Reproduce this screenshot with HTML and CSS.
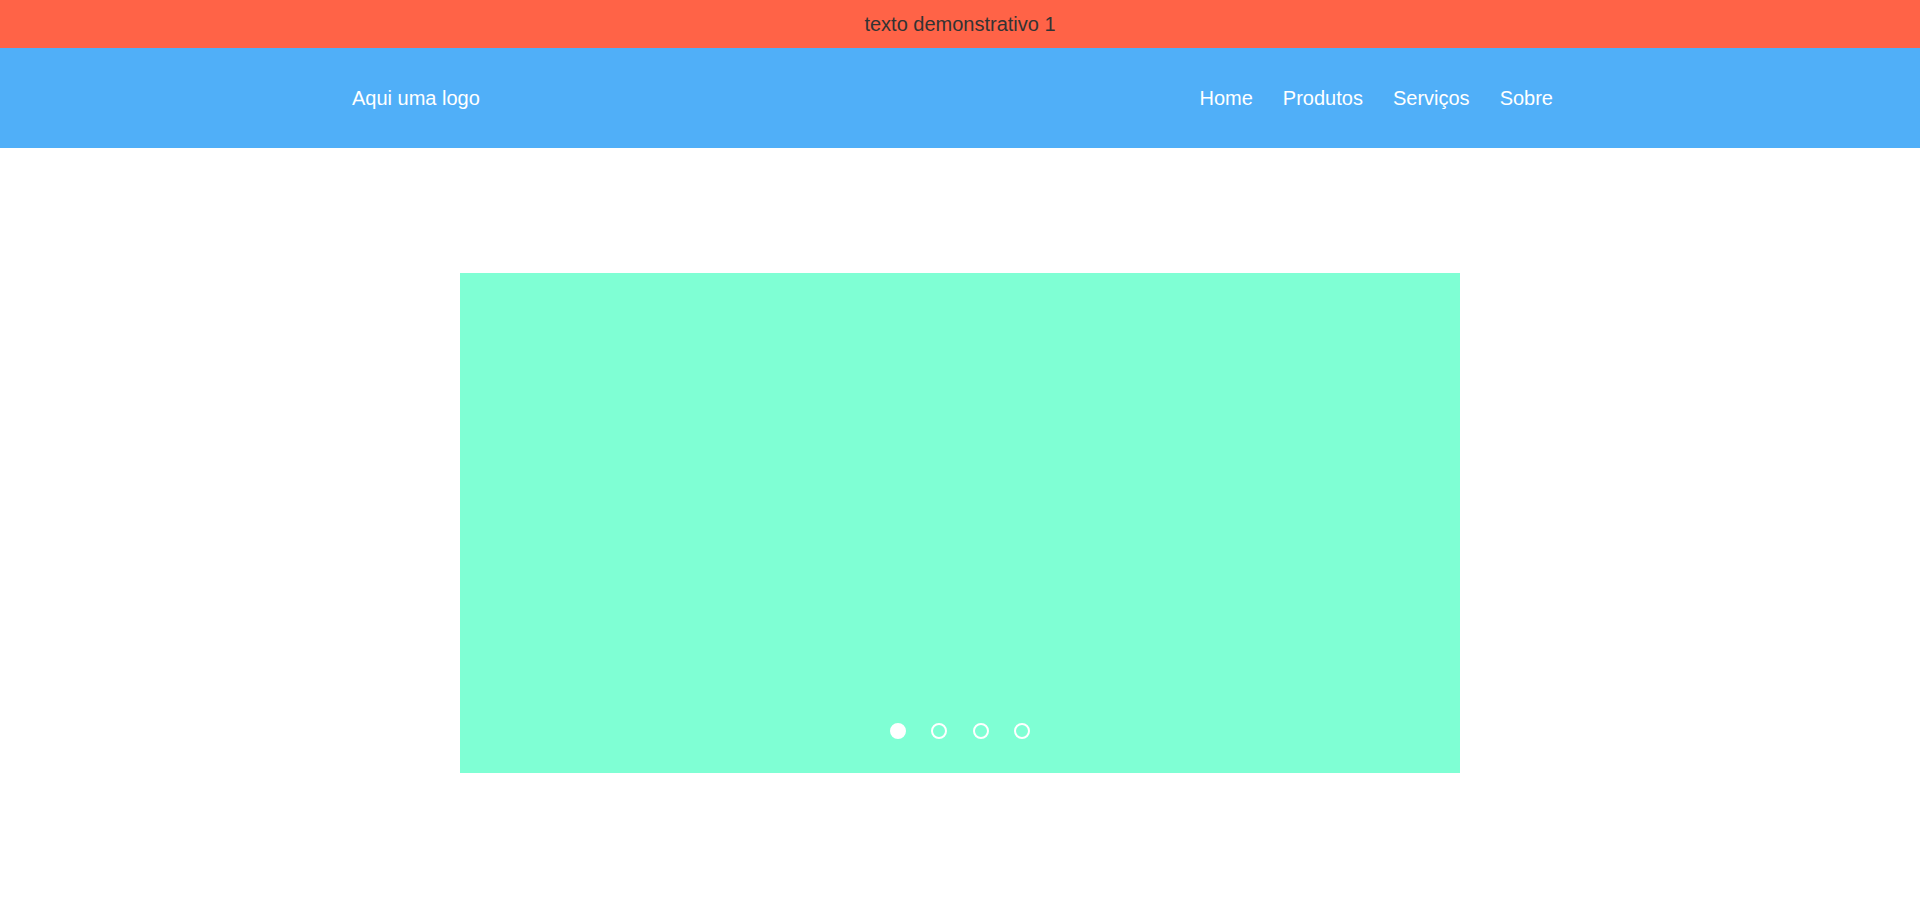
FILE: index.html
```html
<!DOCTYPE html>
<html lang="pt-BR">
<head>
<meta charset="utf-8">
<title>Demo</title>
<link rel="stylesheet" href="styles.css">
</head>
<body>
<div class="topbar">texto demonstrativo 1</div>
<header class="header">
  <div class="container">
    <div class="logo">Aqui uma logo</div>
    <nav class="menu">
      <a href="#">Home</a>
      <a href="#">Produtos</a>
      <a href="#">Serviços</a>
      <a href="#">Sobre</a>
    </nav>
  </div>
</header>
<main class="main">
  <div class="slider">
    <div class="dots">
      <span class="dot active"></span>
      <span class="dot"></span>
      <span class="dot"></span>
      <span class="dot"></span>
    </div>
  </div>
</main>
</body>
</html>
```

FILE: styles.css
```css
* { box-sizing: border-box; }
html, body { margin: 0; padding: 0; }
body {
  font-family: "Liberation Sans", Arial, sans-serif;
  font-size: 20px;
  background: #fff;
}
.topbar {
  height: 48px;
  background: #ff6347;
  color: #333;
  display: flex;
  align-items: center;
  justify-content: center;
}
.header {
  height: 100px;
  background: #50aff8;
  color: #fff;
}
.container {
  width: 1216px;
  height: 100%;
  margin: 0 auto;
  display: flex;
  align-items: center;
  justify-content: space-between;
}
.menu { display: flex; }
.menu a {
  color: #fff;
  text-decoration: none;
  padding: 0 15px;
}
.main {
  padding-top: 125px;
  display: flex;
  justify-content: center;
}
.slider {
  width: 1000px;
  height: 500px;
  background: #7fffd4;
  display: flex;
  align-items: flex-end;
  justify-content: center;
  padding-bottom: 34px;
}
.dots {
  display: flex;
  gap: 25.5px;
}
.dot {
  width: 16px;
  height: 16px;
  border: 2px solid #fff;
  border-radius: 50%;
}
.dot.active { background: #fff; }
```
